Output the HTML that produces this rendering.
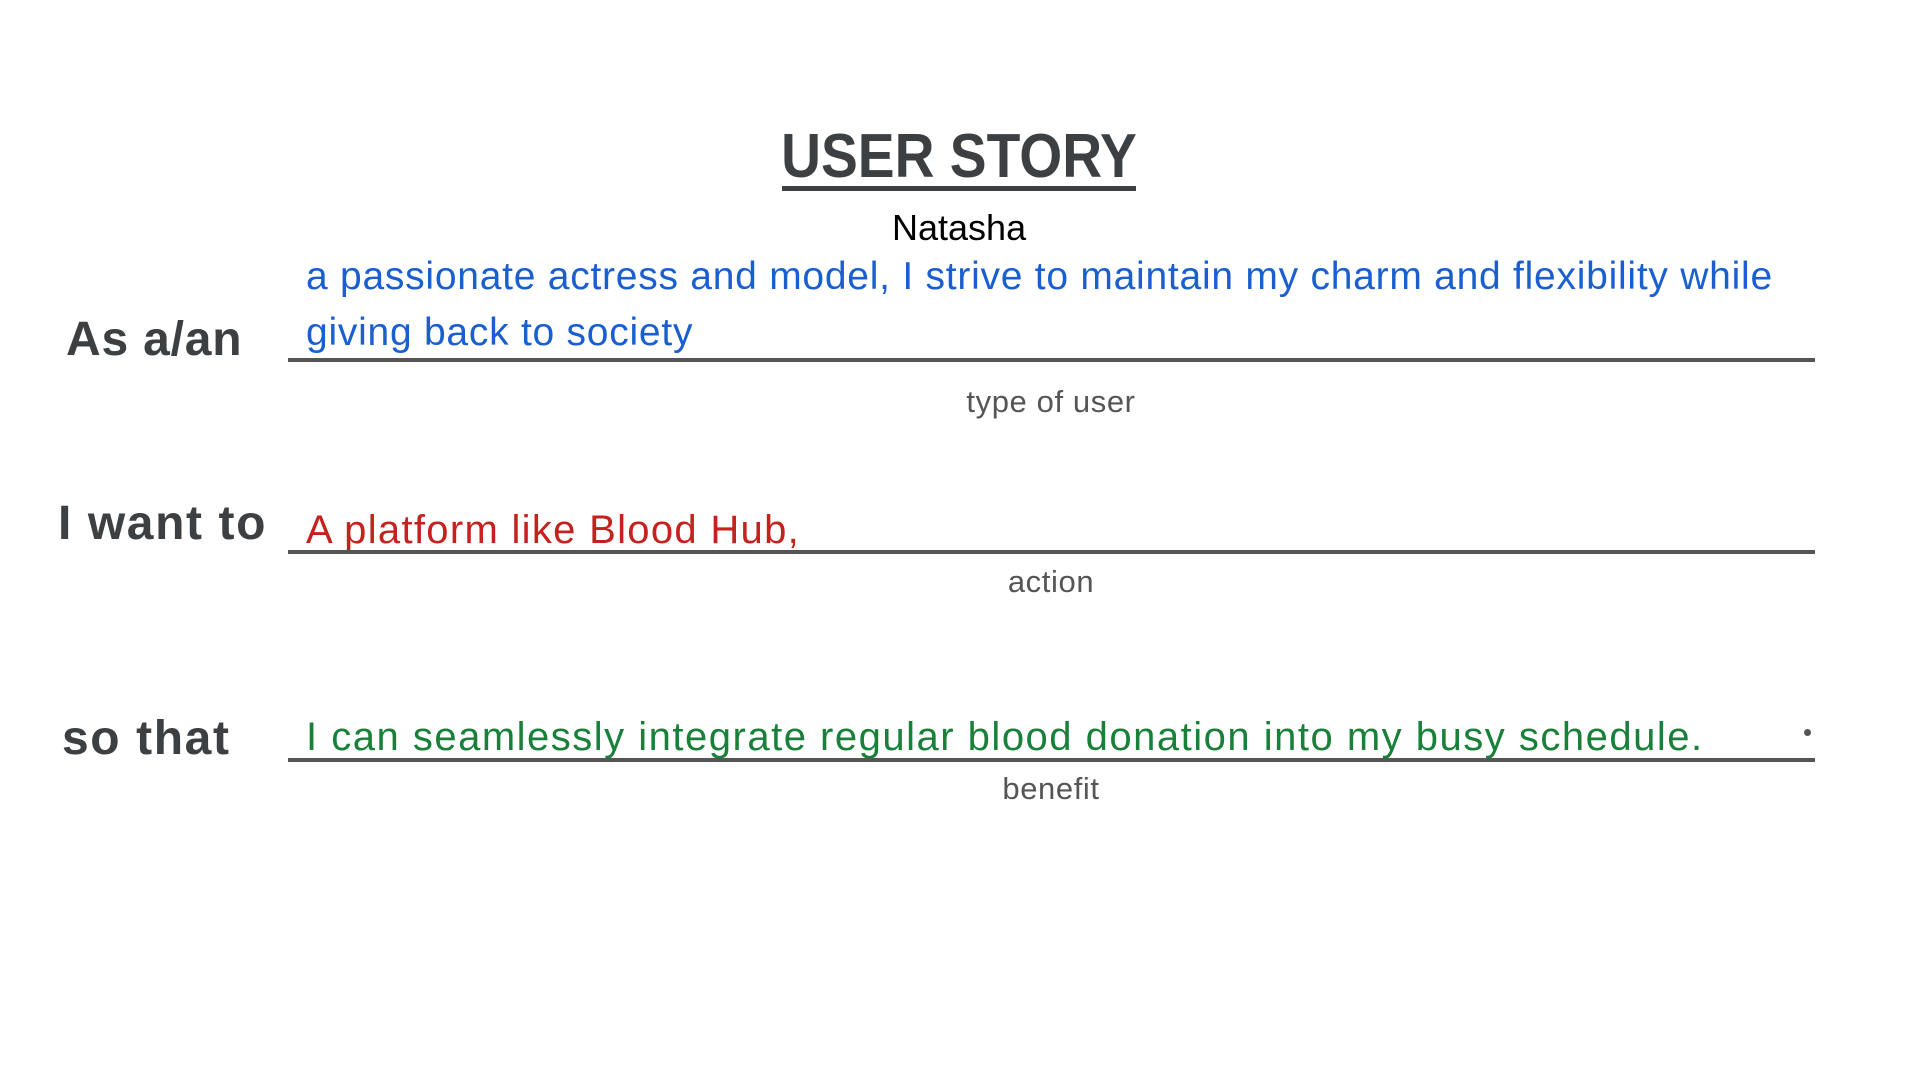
<!DOCTYPE html>
<html><head><meta charset="utf-8"><style>
html,body{margin:0;padding:0;background:#fff;width:1920px;height:1080px;overflow:hidden;position:relative;font-family:"Liberation Sans",sans-serif}
.a{position:absolute;white-space:nowrap;line-height:1}
.ln{position:absolute;left:288px;width:1527px;height:4px;background:#555}
.lab{font-weight:bold;color:#3c4043;font-size:48px}
.sm{color:#555;font-size:31px;letter-spacing:0.6px;transform:translateX(-50%);left:1051px}
</style></head><body>
<div class="a" style="left:682px;top:126px;width:554px;text-align:center;font-size:62px;font-weight:bold;color:#3c4043;transform:scaleX(0.89);transform-origin:center">USER STORY</div>
<div style="position:absolute;left:782px;top:186px;width:354px;height:5px;background:#3c4043"></div>
<div class="a" style="left:892px;top:210px;font-size:36px;color:#000">Natasha</div>
<div class="a" style="left:306px;top:257px;font-size:39px;color:#1a5fd0;letter-spacing:0.75px">a passionate actress and model, I strive to maintain my charm and flexibility while</div>
<div class="a" style="left:306px;top:313px;font-size:39px;color:#1a5fd0;letter-spacing:0.75px">giving back to society</div>
<div class="a lab" style="left:66px;top:316px;letter-spacing:0.8px">As a/an</div>
<div class="ln" style="top:358px"></div>
<div class="a sm" style="top:386px">type of user</div>
<div class="a lab" style="left:58px;top:500px;letter-spacing:1.6px">I want to</div>
<div class="a" style="left:306px;top:510px;font-size:40px;color:#c5221f;letter-spacing:1.3px">A platform like Blood Hub,</div>
<div class="ln" style="top:550px"></div>
<div class="a sm" style="top:566px">action</div>
<div class="a lab" style="left:62px;top:715px;letter-spacing:1.6px">so that</div>
<div class="a" style="left:306px;top:717px;font-size:40px;color:#188038;letter-spacing:1.5px">I can seamlessly integrate regular blood donation into my busy schedule.</div>
<div style="position:absolute;left:1804px;top:729px;width:7px;height:7px;border-radius:50%;background:#555"></div>
<div class="ln" style="top:758px"></div>
<div class="a sm" style="top:773px">benefit</div>
</body></html>
